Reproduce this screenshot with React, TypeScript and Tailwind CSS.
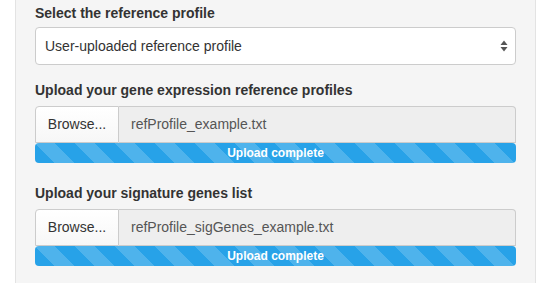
export default function App() {
  const stripes =
    'bg-[#27a2e8] bg-[linear-gradient(45deg,rgba(255,255,255,0.18)_25%,transparent_25%,transparent_50%,rgba(255,255,255,0.18)_50%,rgba(255,255,255,0.18)_75%,transparent_75%,transparent)] bg-[length:40px_40px]';

  const FileRow = ({ file }: { file: string }) => (
    <div>
      <div className="flex h-[37px]">
        <div className="flex w-[84px] items-center justify-center rounded-tl-[4px] border border-[#ccc] bg-gradient-to-b from-white to-[#f7f7f7] text-[14px] text-[#333]">
          Browse...
        </div>
        <div className="flex flex-1 items-center rounded-tr-[4px] border border-l-0 border-[#ccc] bg-[#eeeeee] pl-[12px] text-[14px] text-[#555]">
          {file}
        </div>
      </div>
      <div className={`flex h-[20px] items-center justify-center rounded-[4px] ${stripes} text-[12px] font-bold text-white`}>
        Upload complete
      </div>
    </div>
  );

  return (
    <div className="h-[283px] w-[546px] overflow-hidden bg-white font-['Liberation_Sans',Arial,sans-serif]">
      <div className="ml-[15px] h-full w-[521px] border-x border-[#e3e3e3] bg-[#f5f5f5] px-[19px] pt-[3px]">
        <div className="mb-[4px] text-[14px] font-bold leading-[20px] text-[#333]">Select the reference profile</div>
        <div className="flex h-[38px] items-center justify-between rounded-[4px] border border-[#ccc] bg-white pl-[9px] pr-[7px] text-[14px] text-[#333]">
          <span>User-uploaded reference profile</span>
          <svg width="8" height="12" viewBox="0 0 8 12">
            <path d="M4 0.5L7.5 5H0.5Z" fill="#555" />
            <path d="M4 11.5L7.5 7H0.5Z" fill="#555" />
          </svg>
        </div>

        <div className="mb-[6px] mt-[15px] text-[14px] font-bold leading-[20px] text-[#333]">
          Upload your gene expression reference profiles
        </div>
        <FileRow file="refProfile_example.txt" />

        <div className="mb-[6px] mt-[20px] text-[14px] font-bold leading-[20px] text-[#333]">
          Upload your signature genes list
        </div>
        <FileRow file="refProfile_sigGenes_example.txt" />
      </div>
    </div>
  );
}
